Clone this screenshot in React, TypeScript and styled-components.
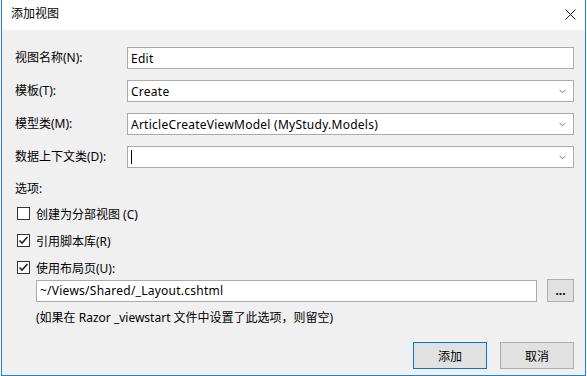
import React from 'react';
import styled, { createGlobalStyle } from 'styled-components';

const GlobalStyle = createGlobalStyle`
  html, body {
    margin: 0;
    padding: 0;
    background: #ffffff;
  }
  body {
    font-family: "Segoe UI", "Noto Sans", "Noto Sans CJK SC", sans-serif;
    font-size: 12px;
    color: #000;
  }
`;

const Window = styled.div`
  margin-left: 1px;
  width: 585px;
  box-sizing: border-box;
  border: 1px solid #1883d7;
  border-top: none;
  background: #f0f0f0;
`;

const TitleBar = styled.div`
  height: 30px;
  background: #ffffff;
  display: flex;
  align-items: center;
  justify-content: space-between;
  padding: 0 9px 2px 9px;
  box-sizing: border-box;
`;

const Title = styled.div`
  font-size: 12px;
  line-height: 16px;
`;

const Body = styled.div`
  display: flex;
  flex-direction: column;
  padding: 17px 11px 6px 13px;
`;

const FormGrid = styled.div`
  display: grid;
  grid-template-columns: 112px 1fr;
  grid-auto-rows: 22px;
  row-gap: 11px;
  align-items: center;
`;

const Label = styled.div`
  line-height: 16px;
  white-space: nowrap;
`;

const Field = styled.div<{ $dropdown?: boolean }>`
  position: relative;
  height: 22px;
  box-sizing: border-box;
  border: 1px solid #ababab;
  background: #fff;
  display: flex;
  align-items: center;
  padding: 0 ${p => (p.$dropdown ? '20px' : '4px')} 0 3px;
  white-space: nowrap;
  overflow: hidden;
  letter-spacing: 0.25px;
`;

const Chevron = styled.svg`
  position: absolute;
  right: 7px;
  top: 8px;
`;

const Caret = styled.span`
  display: inline-block;
  width: 1px;
  height: 14px;
  background: #000;
`;

const SectionLabel = styled.div`
  margin-top: 13px;
  line-height: 16px;
`;

const CheckList = styled.div`
  display: flex;
  flex-direction: column;
  gap: 10px;
  margin-top: 8px;
  padding-left: 2px;
`;

const CheckRow = styled.div`
  display: flex;
  align-items: center;
  gap: 6px;
  height: 17px;
`;

const Box = styled.span`
  width: 13px;
  height: 13px;
  box-sizing: border-box;
  border: 1px solid #333;
  background: #fff;
  display: flex;
  align-items: center;
  justify-content: center;
`;

const PathRow = styled.div`
  display: flex;
  align-items: center;
  gap: 10px;
  margin: 3px 0 0 21px;
`;

const PathField = styled(Field)`
  flex: 1;
`;

const Browse = styled.div`
  width: 27px;
  height: 23px;
  box-sizing: border-box;
  border: 1px solid #adadad;
  background: #e1e1e1;
  display: flex;
  align-items: center;
  justify-content: center;
  padding-bottom: 1px;
  font-size: 12px;
  font-weight: bold;
  letter-spacing: 0;
`;

const Hint = styled.div`
  margin: 8px 0 0 21px;
  line-height: 16px;
`;

const Footer = styled.div`
  display: flex;
  justify-content: flex-end;
  gap: 13px;
  margin-top: 16px;
`;

const Button = styled.div<{ $primary?: boolean }>`
  width: 74px;
  height: 27px;
  box-sizing: border-box;
  border: 1px solid ${p => (p.$primary ? '#0078d7' : '#adadad')};
  background: #e1e1e1;
  display: flex;
  align-items: center;
  justify-content: center;
`;

const Strip = styled.div`
  height: 1px;
  background: repeating-linear-gradient(90deg, #f4f4f4 0 20px, #6b6b6b 20px 23px, #f4f4f4 23px 30px, #0f6b3a 30px 36px, #f4f4f4 36px 52px);
`;

const ChevronIcon = () => (
  <Chevron width="7" height="5" viewBox="0 0 7 5">
    <polyline points="0.5,0.8 3.5,3.8 6.5,0.8" fill="none" stroke="#7a7a7a" strokeWidth="1" />
  </Chevron>
);

const CheckBox = ({ checked }: { checked?: boolean }) => (
  <Box>
    {checked && (
      <svg width="11" height="11" viewBox="0 0 11 11">
        <polyline points="1.5,5.5 4,8 9.5,2" fill="none" stroke="#222" strokeWidth="1.6" />
      </svg>
    )}
  </Box>
);

const rows = [
  { label: '视图名称(N):', value: 'Edit', dropdown: false },
  { label: '模板(T):', value: 'Create', dropdown: true },
  { label: '模型类(M):', value: 'ArticleCreateViewModel (MyStudy.Models)', dropdown: true },
];

const App: React.FC = () => (
  <>
    <GlobalStyle />
    <Window>
      <TitleBar>
        <Title>添加视图</Title>
        <svg width="11" height="11" viewBox="0 0 11 11">
          <path d="M0.5 0.5 L10.5 10.5 M10.5 0.5 L0.5 10.5" stroke="#111" strokeWidth="1" />
        </svg>
      </TitleBar>
      <Body>
        <FormGrid>
          {rows.map(r => (
            <React.Fragment key={r.label}>
              <Label>{r.label}</Label>
              <Field $dropdown={r.dropdown}>
                {r.value}
                {r.dropdown && <ChevronIcon />}
              </Field>
            </React.Fragment>
          ))}
          <Label>数据上下文类(D):</Label>
          <Field $dropdown>
            <Caret />
            <ChevronIcon />
          </Field>
        </FormGrid>
        <SectionLabel>选项:</SectionLabel>
        <CheckList>
          <CheckRow>
            <CheckBox />
            创建为分部视图 (C)
          </CheckRow>
          <CheckRow>
            <CheckBox checked />
            引用脚本库(R)
          </CheckRow>
          <CheckRow>
            <CheckBox checked />
            使用布局页(U):
          </CheckRow>
        </CheckList>
        <PathRow>
          <PathField>~/Views/Shared/_Layout.cshtml</PathField>
          <Browse>...</Browse>
        </PathRow>
        <Hint>(如果在 Razor _viewstart 文件中设置了此选项，则留空)</Hint>
        <Footer>
          <Button $primary>添加</Button>
          <Button>取消</Button>
        </Footer>
      </Body>
    </Window>
    <Strip />
  </>
);

export default App;
